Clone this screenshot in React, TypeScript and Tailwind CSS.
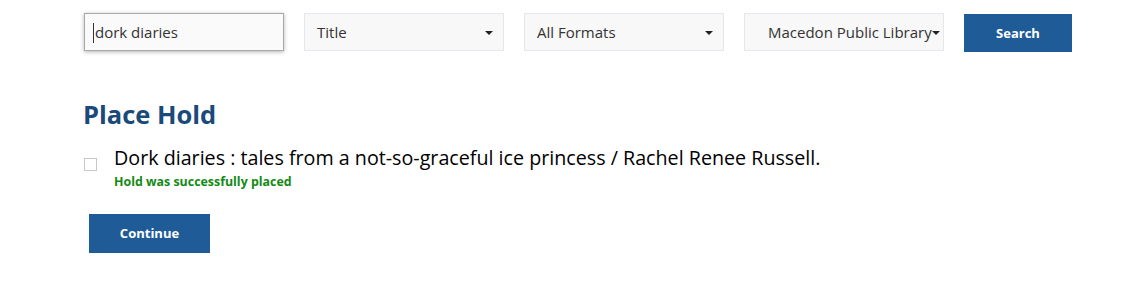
import React from "react";

const Caret = () => (
  <span className="ml-auto h-0 w-0 border-x-[4px] border-t-[4px] border-x-transparent border-t-[#222]" />
);

const SelectBox = ({ label, pad = "pl-3" }: { label: string; pad?: string }) => (
  <div
    className={`flex h-[38px] w-[200px] items-center border border-[#e6e7ec] bg-[#f8f8f8] ${pad} pr-[10px] pt-px text-[15px] text-[#333]`}
  >
    <span className="whitespace-nowrap">{label}</span>
    <Caret />
  </div>
);

export default function App() {
  return (
    <div className="min-h-[283px] bg-white pl-[84px] pt-[13px] font-['Open_Sans',sans-serif]">
      {/* search bar */}
      <div className="flex items-start gap-5">
        <div className="flex h-[38px] w-[200px] items-center border border-[#a9a9a9] bg-[#fafafa] pl-2 pt-px text-[15px] text-[#333] shadow-[0_1px_4px_rgba(0,0,0,0.3)]">
          <span className="mr-px h-[20px] w-px bg-[#333]" />
          dork diaries
        </div>
        <SelectBox label="Title" />
        <SelectBox label="All Formats" />
        <SelectBox label="Macedon Public Library" pad="pl-[23px]" />
        <button className="mt-px h-[38px] w-[108px] bg-[#1f5c97] pt-[2px] text-[13px] font-bold text-white">
          Search
        </button>
      </div>

      {/* hold result */}
      <h1 className="-ml-px mt-[46px] text-[25.5px] font-bold leading-[32px] text-[#1a4a7a]">Place Hold</h1>
      <div className="mt-[14px] flex items-start">
        <span className="mt-[14px] h-[13px] w-[13px] border border-[#c8c8c8] bg-white" />
        <div className="ml-[17px]">
          <div className="text-[19.7px] leading-[28px] text-black">
            Dork diaries : tales from a not-so-graceful ice princess / Rachel Renee Russell.
          </div>
          <div className="mt-[2px] text-[12.4px] font-bold leading-[16px] text-[#138a13]">
            Hold was successfully placed
          </div>
        </div>
      </div>
      <button className="ml-[5px] mt-[24px] h-[39px] w-[121px] bg-[#1f5c97] pt-px text-[13px] font-bold text-white">
        Continue
      </button>
    </div>
  );
}
